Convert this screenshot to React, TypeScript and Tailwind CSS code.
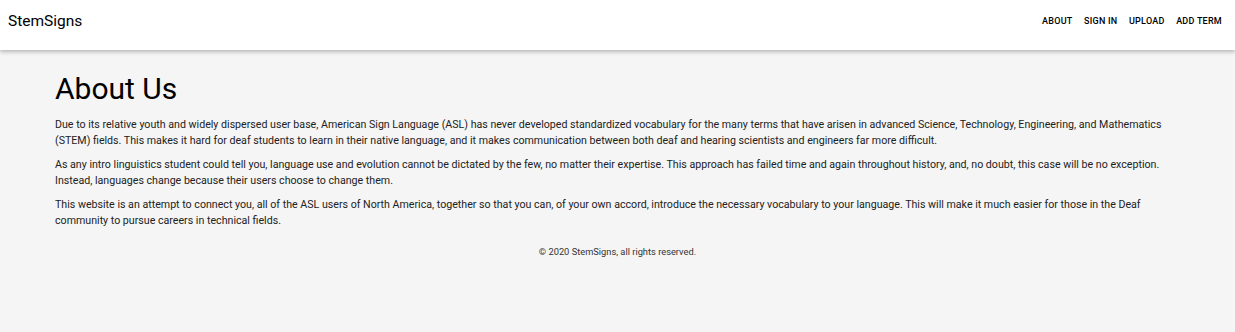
export default function App() {
  return (
    <div className="min-h-[332px] bg-[#f5f5f5] font-['Roboto',sans-serif] text-[#212121]">
      {/* top bar */}
      <header className="h-[50px] bg-white flex items-center justify-between pl-2 pr-[13px] pb-[6px] shadow-[0_2px_4px_rgba(0,0,0,0.25)] relative">
        <span className="text-[15.5px] text-black">StemSigns</span>
        <nav className="flex gap-[11.5px] text-[9px] font-medium tracking-[0.25px] text-black">
          <span>ABOUT</span>
          <span>SIGN IN</span>
          <span>UPLOAD</span>
          <span>ADD TERM</span>
        </nav>
      </header>

      <main className="px-[55px] pt-[21px]">
        <h1 className="text-[30px] leading-[36px] font-normal text-black mb-[10px]">About Us</h1>
        <div className="text-[10.65px] leading-[16px] flex flex-col gap-[8px] text-[#222]">
          <p>
            Due to its relative youth and widely dispersed user base, American Sign Language (ASL) has never developed standardized vocabulary for the many terms that have arisen in advanced Science, Technology, Engineering, and Mathematics (STEM) fields. This makes it hard for deaf students to learn in their native language, and it makes communication between both deaf and hearing scientists and engineers far more difficult.
          </p>
          <p>
            As any intro linguistics student could tell you, language use and evolution cannot be dictated by the few, no matter their expertise. This approach has failed time and again throughout history, and, no doubt, this case will be no exception. Instead, languages change because their users choose to change them.
          </p>
          <p>
            This website is an attempt to connect you, all of the ASL users of North America, together so that you can, of your own accord, introduce the necessary vocabulary to your language. This will make it much easier for those in the Deaf community to pursue careers in technical fields.
          </p>
        </div>
        <footer className="text-center text-[9.3px] text-[#333] mt-[16px]">© 2020 StemSigns, all rights reserved.</footer>
      </main>
    </div>
  );
}
